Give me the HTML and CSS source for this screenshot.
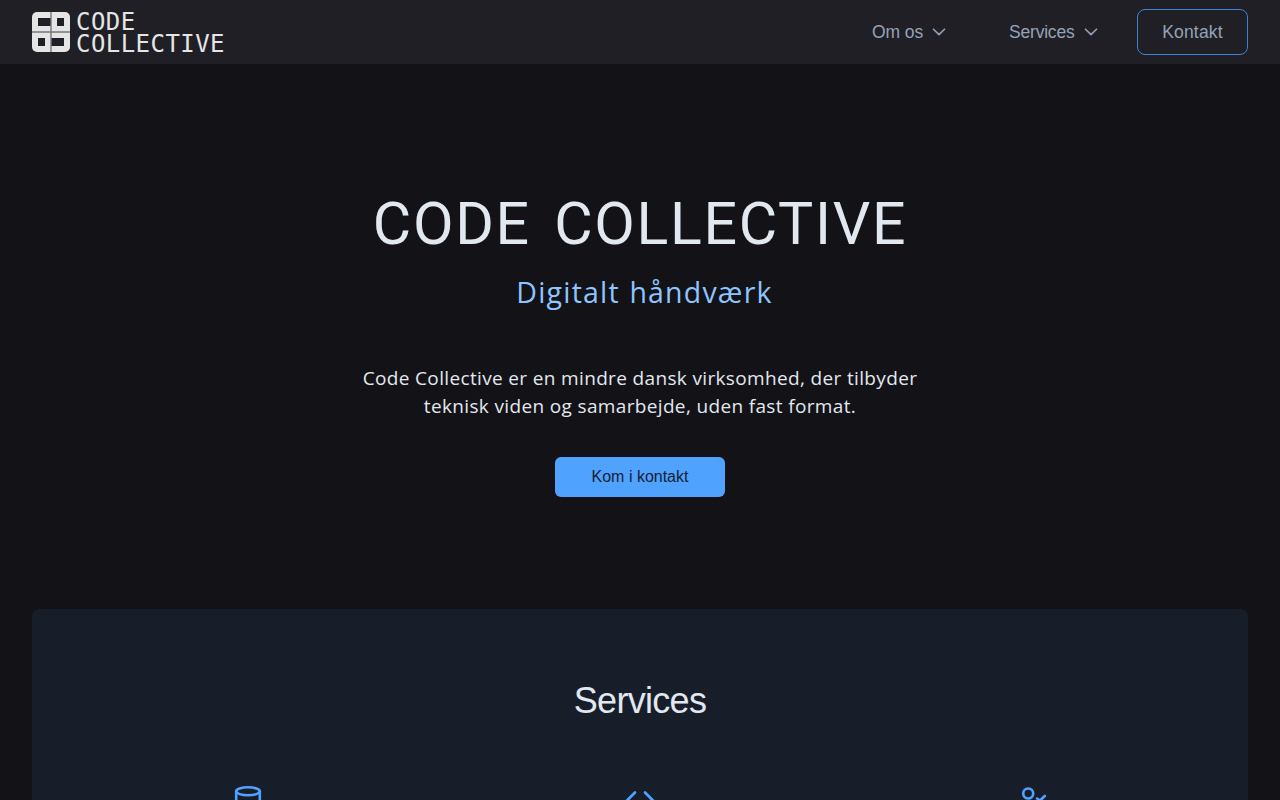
FILE: index.html
```html
<!DOCTYPE html>
<html lang="da">
<head>
  <meta charset="UTF-8">
  <meta name="viewport" content="width=device-width, initial-scale=1.0">
  <title>Code Collective</title>
  <link rel="stylesheet" href="styles.css">
</head>
<body>
  <header class="navbar">
    <a href="#" class="logo">
      <svg class="logo-mark" viewBox="0 0 38 40">
        <rect width="38" height="40" rx="5" fill="#e5e5e5"/>
        <path d="M6 6h13v8H6zM25 6h7v8h-7zM6 26h7v8H6zM19 26h13v8H19z" fill="#201f25"/>
        <path d="M0 20h38M19 0v40" stroke="#77767a" stroke-width="1.4"/>
      </svg>
      <span class="logo-text">
        <span>CODE</span>
        <span>COLLECTIVE</span>
      </span>
    </a>
    <nav class="menu">
      <a href="#" class="menu-item">
        <span class="om">Om os</span>
        <svg class="chevron" viewBox="0 0 14 8"><path d="M1.500 1.200 7 6.600l5.500-5.400"/></svg>
      </a>
      <a href="#services" class="menu-item">
        <span class="serv">Services</span>
        <svg class="chevron" viewBox="0 0 14 8"><path d="M1.500 1.200 7 6.600l5.500-5.400"/></svg>
      </a>
      <a href="#" class="menu-contact">Kontakt</a>
    </nav>
  </header>

  <main>
    <section class="hero">
      <h1>CODE COLLECTIVE</h1>
      <h2>Digitalt håndværk</h2>
      <p>Code Collective er en mindre dansk virksomhed, der tilbyder<br>
        teknisk viden og samarbejde, uden fast format.</p>
      <a href="#" class="button">Kom i kontakt</a>
    </section>

    <section class="services" id="services">
      <h3>Services</h3>
      <div class="service-icons">
        <svg class="icon" viewBox="0 0 36 36">
          <ellipse cx="18" cy="9.300" rx="11.800" ry="4"/>
          <path d="M6.200 9v18c0 2.500 5.300 4.500 11.800 4.500s11.800-2 11.800-4.500V9M6.200 18c0 2.500 5.300 4.500 11.800 4.500s11.800-2 11.800-4.500"/>
        </svg>
        <svg class="icon" viewBox="0 0 36 36">
          <path d="M13 10.500 4.500 19l8.500 8.500M23 10.500l8.500 8.500-8.500 8.500"/>
        </svg>
        <svg class="icon" viewBox="0 0 36 36">
          <circle cx="14.200" cy="11.500" r="5"/>
          <path d="M5 31v-3c0-4 3-7 7-7h5M23 16.500l3 2 4.800-4.500"/>
        </svg>
      </div>
    </section>
  </main>
</body>
</html>
```
FILE: styles.css
```css
* {
  box-sizing: border-box;
}

body {
  margin: 0;
  background: #131217;
  color: #e2e8f0;
  font-family: 'Liberation Sans', Arial, sans-serif;
}

a {
  color: inherit;
  text-decoration: none;
}

h1, h2, h3, p {
  margin: 0;
  font-weight: 400;
}

.navbar {
  display: flex;
  align-items: center;
  justify-content: space-between;
  height: 64px;
  padding: 0 32px;
  background: #201f25;
}

.logo {
  display: flex;
  align-items: center;
  gap: 6px;
}

.logo-mark {
  width: 38px;
  height: 40px;
}

.logo-text {
  display: flex;
  flex-direction: column;
  padding-top: 1px;
  font-family: 'DejaVu Sans Mono', monospace;
  font-size: 24px;
  line-height: 22px;
  letter-spacing: 0.45px;
  color: #e5e5e5;
}

.menu {
  display: flex;
  align-items: center;
  color: #94a3b8;
  font-size: 17.5px;
  white-space: nowrap;
}

.menu-item {
  display: flex;
  align-items: center;
  gap: 9px;
}

.menu-item:first-child {
  margin-right: 63px;
}

.om {
  width: 51px;
  letter-spacing: -0.1px;
}

.serv {
  width: 66px;
  letter-spacing: -0.2px;
}

.chevron {
  width: 14px;
  height: 8px;
  fill: none;
  stroke: #94a3b8;
  stroke-width: 1.6;
  stroke-linecap: round;
  stroke-linejoin: round;
}

.menu-contact {
  width: 111px;
  height: 46px;
  margin-left: 39px;
  border: 1px solid #3b82d6;
  border-radius: 8px;
  line-height: 44px;
  text-align: center;
  letter-spacing: 0.2px;
}

.hero {
  display: flex;
  flex-direction: column;
  align-items: center;
  height: 545px;
  padding-top: 125px;
  text-align: center;
}

h1 {
  font-family: Roboto, sans-serif;
  font-size: 59px;
  line-height: 70px;
  letter-spacing: 1.7px;
  word-spacing: 7px;
}

h2 {
  margin-top: 15px;
  padding-left: 9px;
  color: #8ec5ff;
  font-family: 'Open Sans', sans-serif;
  font-size: 28.5px;
  line-height: 36px;
  letter-spacing: 1.2px;
  word-spacing: 1px;
}

.hero p {
  margin-top: 54px;
  font-family: 'Open Sans', sans-serif;
  font-size: 19px;
  line-height: 28px;
  letter-spacing: 0.35px;
}

.button {
  width: 170px;
  height: 40px;
  margin-top: 37px;
  border-radius: 6px;
  background: #50a2ff;
  color: #162033;
  font-size: 16px;
  line-height: 40px;
}

.services {
  height: 480px;
  margin: 0 32px;
  padding-top: 70px;
  border-radius: 8px;
  background: #181e29;
  text-align: center;
}

h3 {
  font-size: 36px;
  line-height: 44px;
  letter-spacing: -0.7px;
}

.service-icons {
  display: grid;
  grid-template-columns: repeat(3, 392px);
  justify-content: center;
  justify-items: center;
  margin-top: 59px;
}

.icon {
  width: 36px;
  height: 36px;
  fill: none;
  stroke: #50a2ff;
  stroke-width: 2.6;
  stroke-linecap: round;
  stroke-linejoin: round;
}
```
